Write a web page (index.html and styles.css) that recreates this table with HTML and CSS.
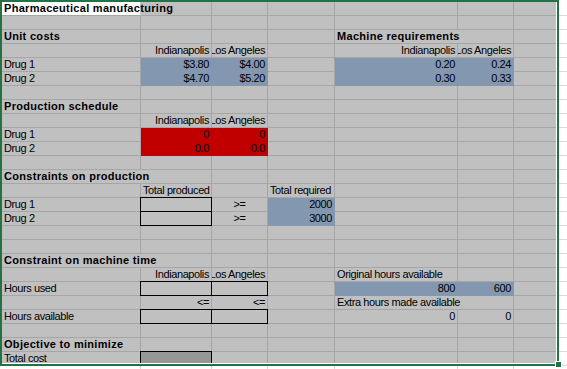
FILE: index.html
```html
<!DOCTYPE html>
<html>
<head>
<meta charset="utf-8">
<link rel="stylesheet" href="styles.css">
</head>
<body>
<div class="page">
  <div class="frame">
    <div class="sheet">
      <div class="row"><div class="c b title">Pharmaceutical manufacturing</div><div class="c"></div><div class="c"></div><div class="c"></div><div class="c"></div><div class="c"></div><div class="c"></div></div>
      <div class="row"><div class="c"></div><div class="c"></div><div class="c"></div><div class="c"></div><div class="c"></div><div class="c"></div><div class="c"></div></div>
      <div class="row"><div class="c b">Unit costs</div><div class="c"></div><div class="c"></div><div class="c"></div><div class="c b s2">Machine requirements</div><div class="c"></div></div>
      <div class="row"><div class="c"></div><div class="c r">Indianapolis</div><div class="c r">Los Angeles</div><div class="c"></div><div class="c r">Indianapolis</div><div class="c r">Los Angeles</div><div class="c"></div></div>
      <div class="row"><div class="c">Drug 1</div><div class="c r blue">$3.80</div><div class="c r blue">$4.00</div><div class="c"></div><div class="c r blue">0.20</div><div class="c r blue">0.24</div><div class="c"></div></div>
      <div class="row"><div class="c">Drug 2</div><div class="c r blue">$4.70</div><div class="c r blue">$5.20</div><div class="c"></div><div class="c r blue">0.30</div><div class="c r blue">0.33</div><div class="c"></div></div>
      <div class="row"><div class="c"></div><div class="c"></div><div class="c"></div><div class="c"></div><div class="c"></div><div class="c"></div><div class="c"></div></div>
      <div class="row"><div class="c b">Production schedule</div><div class="c"></div><div class="c"></div><div class="c"></div><div class="c"></div><div class="c"></div><div class="c"></div></div>
      <div class="row"><div class="c"></div><div class="c r">Indianapolis</div><div class="c r">Los Angeles</div><div class="c"></div><div class="c"></div><div class="c"></div><div class="c"></div></div>
      <div class="row"><div class="c">Drug 1</div><div class="c r red">0</div><div class="c r red">0</div><div class="c"></div><div class="c"></div><div class="c"></div><div class="c"></div></div>
      <div class="row"><div class="c">Drug 2</div><div class="c r red">0.0</div><div class="c r red">0.0</div><div class="c"></div><div class="c"></div><div class="c"></div><div class="c"></div></div>
      <div class="row"><div class="c"></div><div class="c"></div><div class="c"></div><div class="c"></div><div class="c"></div><div class="c"></div><div class="c"></div></div>
      <div class="row"><div class="c b s2">Constraints on production</div><div class="c"></div><div class="c"></div><div class="c"></div><div class="c"></div><div class="c"></div></div>
      <div class="row"><div class="c"></div><div class="c">Total produced</div><div class="c"></div><div class="c">Total required</div><div class="c"></div><div class="c"></div><div class="c"></div></div>
      <div class="row"><div class="c">Drug 1</div><div class="c box"></div><div class="c ctr">&gt;=</div><div class="c r blue">2000</div><div class="c"></div><div class="c"></div><div class="c"></div></div>
      <div class="row"><div class="c">Drug 2</div><div class="c box"></div><div class="c ctr">&gt;=</div><div class="c r blue">3000</div><div class="c"></div><div class="c"></div><div class="c"></div></div>
      <div class="row"><div class="c"></div><div class="c"></div><div class="c"></div><div class="c"></div><div class="c"></div><div class="c"></div><div class="c"></div></div>
      <div class="row"><div class="c"></div><div class="c"></div><div class="c"></div><div class="c"></div><div class="c"></div><div class="c"></div><div class="c"></div></div>
      <div class="row"><div class="c b s2">Constraint on machine time</div><div class="c"></div><div class="c"></div><div class="c"></div><div class="c"></div><div class="c"></div></div>
      <div class="row"><div class="c"></div><div class="c r">Indianapolis</div><div class="c r">Los Angeles</div><div class="c"></div><div class="c">Original hours available</div><div class="c"></div><div class="c"></div></div>
      <div class="row"><div class="c">Hours used</div><div class="c box"></div><div class="c box"></div><div class="c"></div><div class="c r blue">800</div><div class="c r blue">600</div><div class="c"></div></div>
      <div class="row"><div class="c"></div><div class="c r">&lt;=</div><div class="c r">&lt;=</div><div class="c"></div><div class="c s2">Extra hours made available</div><div class="c"></div></div>
      <div class="row"><div class="c">Hours available</div><div class="c box"></div><div class="c box"></div><div class="c"></div><div class="c r">0</div><div class="c r">0</div><div class="c"></div></div>
      <div class="row"><div class="c"></div><div class="c"></div><div class="c"></div><div class="c"></div><div class="c"></div><div class="c"></div><div class="c"></div></div>
      <div class="row"><div class="c b">Objective to minimize</div><div class="c"></div><div class="c"></div><div class="c"></div><div class="c"></div><div class="c"></div><div class="c"></div></div>
      <div class="row"><div class="c">Total cost</div><div class="c box dark"></div><div class="c"></div><div class="c"></div><div class="c"></div><div class="c"></div><div class="c"></div></div>
    </div>
  </div>
  <div class="edge-r"></div>
  <div class="edge-b"><div></div><div></div><div></div><div></div><div></div><div></div><div></div></div>
  <div class="edge-corner"></div>
  <div class="handle"></div>
</div>
</body>
</html>
```
FILE: styles.css
```css
* { box-sizing: border-box; }
html, body { margin: 0; padding: 0; }
body {
  background: #fff;
  font-family: "Liberation Sans", Arial, sans-serif;
  font-size: 11px;
  color: #000;
  width: 567px;
  height: 369px;
  overflow: hidden;
}
.page {
  display: grid;
  grid-template-columns: 559px 8px;
  grid-template-rows: 366px 3px;
  position: relative;
}
.frame { border: 2px solid #217346; }
.sheet {
  height: 362px;
  overflow: hidden;
  background: #c0c0c0;
  border-right: 1px solid #fff;
  border-bottom: 1px solid #fff;
}
.row {
  display: grid;
  grid-template-columns: 139px 71px 56px 67px 123px 56px 42px;
  height: 14px;
}
.c {
  border-right: 1px solid #a6a6a6;
  border-bottom: 1px solid #a6a6a6;
  padding: 0 2px;
  line-height: 13px;
  white-space: nowrap;
  overflow: hidden;
  letter-spacing: -0.4px;
}
.row > .c:last-child { border-right: 0; }
.r { display: flex; justify-content: flex-end; }
.ctr { text-align: center; }
.b { font-weight: bold; letter-spacing: 0.3px; }
.s2 { grid-column: span 2; }
.blue { background: #8497b0; border-color: #8497b0; }
.red { background: #c00000; border-color: #c00000; }
.box {
  border-color: #000;
  box-shadow: -1px 0 #000, 0 -1px #000, -1px -1px #000;
  position: relative;
  z-index: 1;
}
.dark { background: #969696; }
.title {
  background: #fff;
  background-clip: padding-box;
  border-right-color: #c0c0c0;
  overflow: visible;
  position: relative;
  z-index: 1;
}
.edge-r {
  background: repeating-linear-gradient(to bottom, transparent 0 13px, #d9d9d9 13px 14px);
  background-position: 0 2px;
}
.edge-b {
  display: grid;
  grid-template-columns: 141px 71px 56px 67px 123px 56px 45px;
}
.edge-b > div { border-right: 1px solid #d9d9d9; }
.edge-b > div:last-child { border-right: 0; }
.handle {
  position: absolute;
  left: 555px;
  top: 361px;
  width: 7px;
  height: 7px;
  background: #217346;
  border: 1px solid #fff;
}
```
